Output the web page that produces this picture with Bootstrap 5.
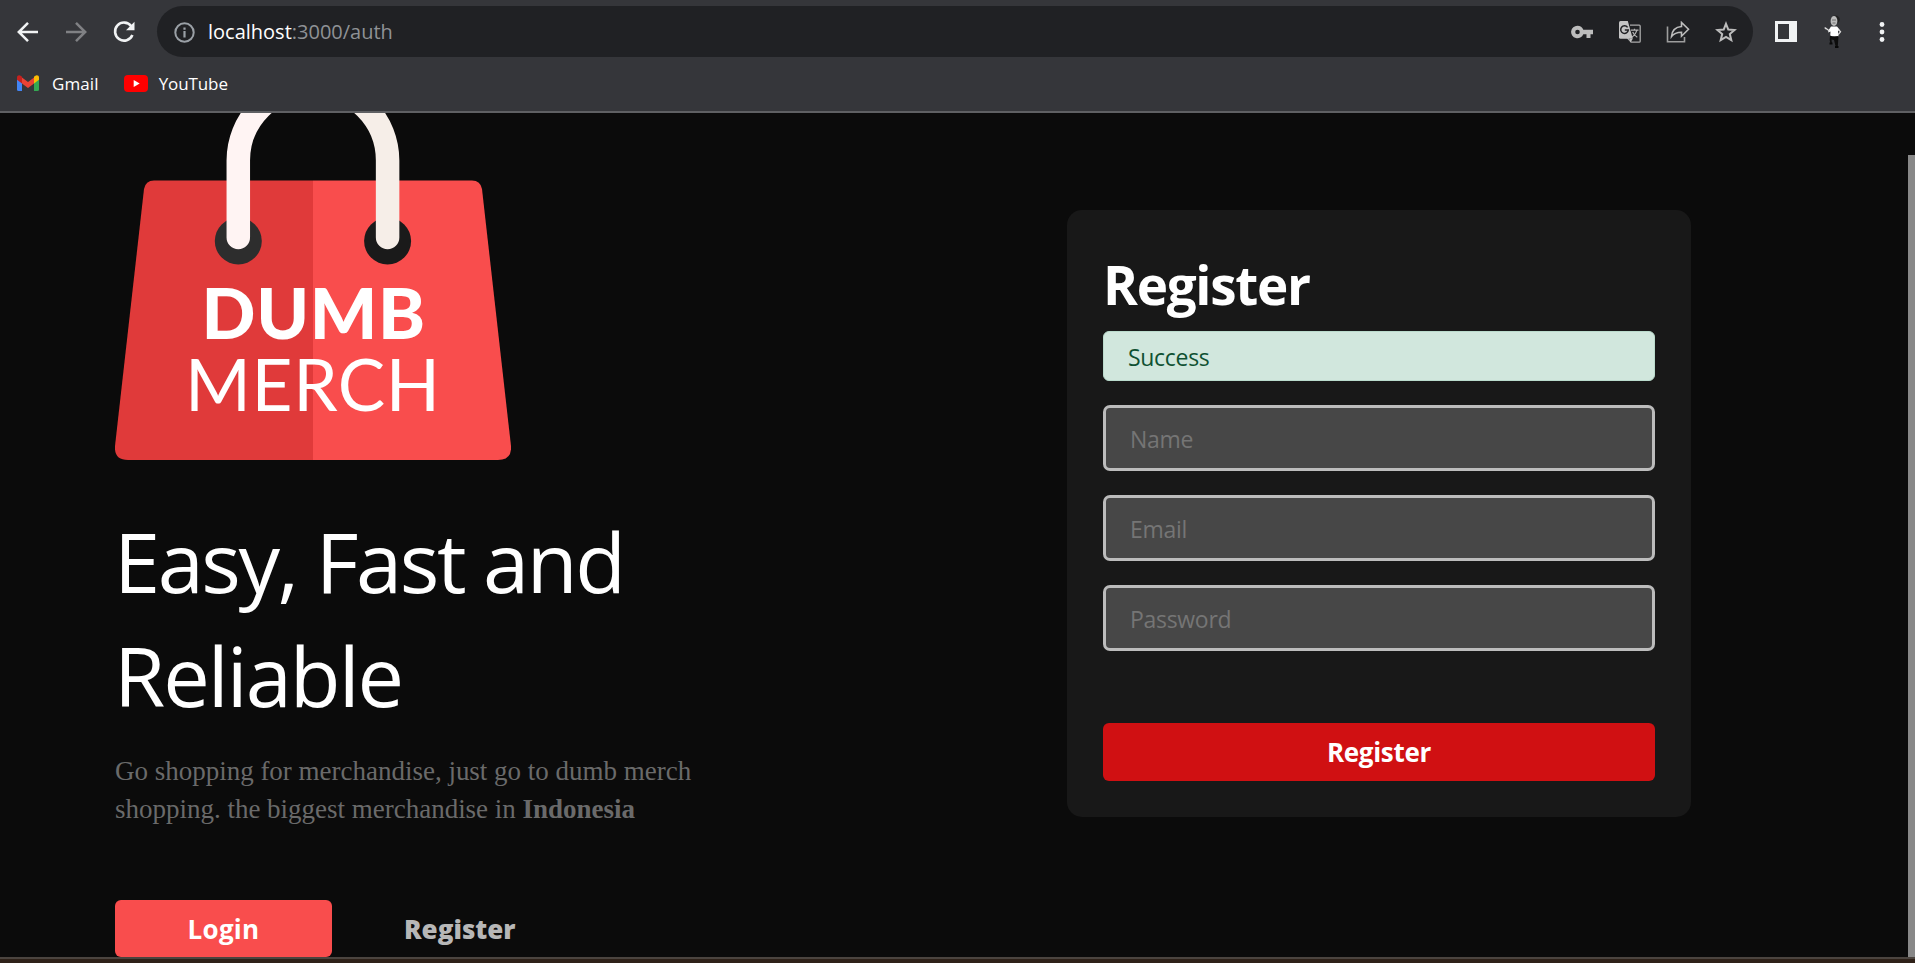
<!DOCTYPE html>
<html lang="en">
<head>
<meta charset="utf-8">
<meta name="viewport" content="width=device-width, initial-scale=1">
<title>DumbMerch</title>
<link href="https://cdn.jsdelivr.net/npm/bootstrap@5.3.0/dist/css/bootstrap.min.css" rel="stylesheet">
<style>
body{font-family:"Open Sans","Noto Sans",sans-serif;background:#2e2118;height:100vh}
svg{display:block}
.chrome-top{height:113px;background:#35363a;border-bottom:2px solid #5f6063;padding-top:6px}
.bar-row{height:51px;padding-left:4px}
.slot{width:48px;height:51px;flex:none;display:flex;align-items:center;justify-content:center}
.address{width:1596px;height:51px;border-radius:26px;background:#202124;margin-left:9px;margin-right:9px;padding-right:3px;font-size:20px;color:#fff}
.address .slot:first-child{width:51px;padding-left:4px}
.address .path{color:#8f9296}
.bookmarks{height:52px;font-size:17px;color:#fff;padding-left:17px}
.bookmarks span{padding-top:1px}
.mail-label{margin:0 25px 0 13px;letter-spacing:.1px}
.tube-label{margin-left:11px;letter-spacing:-.1px}
.viewport{height:844px;background:#0b0b0b}
.thumb{width:7px;margin-top:42px;background:#888}
.intro{width:620px;margin-left:115px}
.headline{font-size:83px;line-height:114px;color:#fff;margin:43px 0 20px -1px;font-weight:400}
.headline .l1{letter-spacing:-2.45px}
.headline .l2{letter-spacing:-2px}
.blurb{font-family:"Liberation Serif",serif;font-size:27px;line-height:38px;color:#6a6a6a;margin-bottom:72px;letter-spacing:-.01px}
.btn-brand{height:57px;width:217px;padding:2px 0 0;border:0;border-radius:6px;background:#f94d4d;color:#fff;font-size:26px;font-weight:700;letter-spacing:.3px}
.btn-plain{height:57px;padding:2px 0 0;border:0;margin-left:72px;color:#b7b7b7;font-size:26px;font-weight:800}
.panel{width:624px;height:607px;margin:97px 0 0 332px;padding:36px;border-radius:15px;background:#181818}
.panel h1{font-size:53px;line-height:77px;font-weight:700;letter-spacing:-1.3px;color:#fff;margin:0 0 8px 0}
.panel .alert{height:50px;padding:0 24px;margin-bottom:24px;border-radius:6px;font-size:23px;line-height:51px;letter-spacing:-.3px;background:#d1e7dd;border-color:#badbcc;color:#0f5132}
.panel .form-control{height:66px;margin-bottom:24px;border:3px solid #bcbcbc;border-radius:7px;background:#474747;color:#fff;font-size:23px;padding:2px 24px 0;letter-spacing:-.3px}
.panel .form-control::placeholder{color:#757575;opacity:1}
.panel .btn{height:58px;margin-top:48px;padding:1px 0 0;border:0;border-radius:6px;background:#d01012;color:#fff;font-size:26px;font-weight:700;letter-spacing:-.3px}
.bottom-edge{height:6px;border-top:2px solid #4b443f}
</style>
</head>
<body class="overflow-hidden">
<header class="chrome-top">
  <div class="bar-row d-flex">
    <div class="slot"><svg width="22" height="22" viewBox="0 0 22 22" fill="none" stroke="#f1f3f4" stroke-width="2.500"><path d="M21 11H2.500M11 1.800 1.800 11l9.200 9.200"/></svg></div>
    <div class="slot"><svg width="22" height="22" viewBox="0 0 22 22" fill="none" stroke="#808184" stroke-width="2.500"><path d="M1 11h18.500M11 1.800l9.200 9.200-9.200 9.200"/></svg></div>
    <div class="slot"><svg width="22" height="22" viewBox="0 0 22 22"><path d="M18.300 5.200A9 9 0 1 0 19.400 14" fill="none" stroke="#f1f3f4" stroke-width="2.600"/><path d="M21.500.8V9.300h-8.500z" fill="#f1f3f4"/></svg></div>
    <div class="address d-flex align-items-center">
      <div class="slot"><svg width="22" height="22" viewBox="0 0 22 22"><circle cx="10.500" cy="11.500" r="9.200" fill="none" stroke="#9aa0a6" stroke-width="2"/><path d="M9.400 10h2.200v6.500H9.400zM9.400 6.500h2.200v2.200H9.400z" fill="#9aa0a6"/></svg></div>
      <div class="flex-grow-1">localhost<span class="path">:3000/auth</span></div>
      <div class="slot"><svg width="22" height="14" viewBox="0 0 22 14" fill="#bdbdbd"><path fill-rule="evenodd" d="M6.500.7a6.300 6.300 0 1 0 5.800 8.500h3.200V13h4V9.200H22V4.700h-9.700A6.300 6.300 0 0 0 6.500.7zm0 4a2.300 2.300 0 1 1 0 4.600 2.300 2.300 0 0 1 0-4.600z"/></svg></div>
      <div class="slot"><svg width="22" height="22" viewBox="0 0 22 22"><path d="M11 4.200h9.200q1 0 1 1v15q0 1-1 1h-8L8.500 17" fill="none" stroke="#a9a9a9" stroke-width="1.300"/><path d="M1.500 0h7.300l5 17.800H1.500Q0 17.800 0 16.300V1.500Q0 0 1.500 0z" fill="#c4c4c4"/><path d="M10.500 17.800h3.300l-2.300 3.700z" fill="#c4c4c4"/><path d="M8.600 6.400A3.800 3.800 0 1 0 9.300 9H5.800" fill="none" stroke="#202124" stroke-width="1.500"/><path d="M12 9.200h7.500M15.500 7.700v1.500M18 9.200q-1 4-5 7M13.700 11q1.500 3.500 4.600 5.200" fill="none" stroke="#b5b5b5" stroke-width="1.200"/></svg></div>
      <div class="slot"><svg width="24" height="22" viewBox="0 0 24 22" fill="none" stroke="#bdbdbd" stroke-width="1.600"><path d="M1.500 5.500v15.300h17V16" stroke="#9d9d9d"/><path d="M15.500 1.500v4C9 6 6 9.500 5.500 15.500c2.500-3.300 5.500-4.300 10-4.300v4L22.500 8.300z"/></svg></div>
      <div class="slot"><svg width="22" height="22" viewBox="0 0 22 22" fill="none" stroke="#bdbdbd" stroke-width="2"><path d="m11 2.800 2.300 5.800 6.200.5-4.700 4 1.500 6.100L11 16l-5.300 3.200 1.500-6.100-4.700-4 6.200-.5z"/></svg></div>
    </div>
    <div class="slot"><svg width="22" height="21" viewBox="0 0 22 21"><path fill-rule="evenodd" d="M0 0h22v21H0zM3 3v15h11V3z" fill="#f1f3f4"/></svg></div>
    <div class="slot"><svg width="20" height="34" viewBox="0 0 20 34"><ellipse cx="11.500" cy="4.500" rx="4.300" ry="4" fill="#222"/><ellipse cx="10" cy="6" rx="3.400" ry="5" fill="#bcbcbc"/><path d="M8 5h4M8.500 8h3" stroke="#666" stroke-width=".9"/><path d="M7 11.500h6l2.500 3-1.500 1.700.5 5.300H6.200l.3-5L4 17.500l1-3z" fill="#fff"/><path d="m5.500 16-4-3M.7 12.500l1.600 1.600M14.500 14.500l2 2.300-2.300 2.800" stroke="#ddd" stroke-width="1.300" fill="none"/><path d="M6 20.500q3 1.500 8.500.5l-.7 10h-2.300l-1.500-6-2.500-.5L8 29H6.500l-.8-4z" fill="#0d0d0d"/><path d="M5.500 28.500h3M11 32h3.500" stroke="#080808" stroke-width="1.800"/></svg></div>
    <div class="slot"><svg width="6" height="22" viewBox="0 0 6 22" fill="#f1f3f4"><circle cx="3" cy="3.500" r="2.400"/><circle cx="3" cy="11" r="2.400"/><circle cx="3" cy="18.500" r="2.400"/></svg></div>
  </div>
  <nav class="bookmarks d-flex align-items-center">
    <svg width="22" height="16" viewBox="0 0 22 16"><path d="M0 4v10.500Q0 16 1.500 16H5V7z" fill="#4285f4"/><path d="M22 4v10.500Q22 16 20.500 16H17V7z" fill="#34a853"/><path d="M5 2.500 11 7l6-4.500v6L11 13 5 8.500z" fill="#ea4335"/><path d="M0 2.500C0 .3 2.200-.4 4 .9l1 .8v6.800L0 4.800z" fill="#c5221f"/><path d="M22 2.500C22 .3 19.800-.4 18 .9l-1 .8v6.800l5-3.700z" fill="#fbbc04"/></svg>
    <span class="mail-label">Gmail</span>
    <svg width="24" height="17" viewBox="0 0 24 17"><rect width="24" height="17" rx="4" fill="#f00"/><path d="m9.700 5 6 3.500-6 3.500z" fill="#fff"/></svg>
    <span class="tube-label">YouTube</span>
  </nav>
</header>
<main class="viewport d-flex overflow-hidden">
  <section class="intro flex-shrink-0">
    <svg width="396" height="348" viewBox="115 113 396 348">
      <path d="M154 180.500H313V460H128Q114 460 115 446L144 189Q145.500 180.500 154 180.500z" fill="#e03a3a"/>
      <path d="M313 180.500H472Q480.500 180.500 482 189L511 446Q512 460 498 460H313z" fill="#f94d4d"/>
      <circle cx="238.300" cy="241" r="23.500" fill="#2d2d2d"/><circle cx="387.600" cy="241" r="23.500" fill="#1a1a1a"/>
      <path d="M238.300 237.500V160.500A74.700 74.700 0 0 1 313 85.800" fill="none" stroke="#fff4f3" stroke-width="23.500" stroke-linecap="round"/>
      <path d="M387.600 237.500V160.500A74.700 74.700 0 0 0 313 85.800" fill="none" stroke="#f6eee8" stroke-width="23.500" stroke-linecap="round"/>
      <text x="201.500" y="339" font-family="Lato, sans-serif" font-weight="900" font-size="71" letter-spacing=".7" fill="#fff">DUMB</text>
      <text x="185" y="411" font-family="Lato, sans-serif" font-weight="400" font-size="71" letter-spacing=".6" fill="#fff">MERCH</text>
    </svg>
    <h2 class="headline"><span class="l1">Easy, Fast and</span><br><span class="l2">Reliable</span></h2>
    <p class="blurb">Go shopping for merchandise, just go to dumb merch<br>shopping. the biggest merchandise in <b>Indonesia</b></p>
    <div class="d-flex"><button class="btn btn-brand">Login</button><button class="btn btn-plain">Register</button></div>
  </section>
  <form class="panel flex-shrink-0">
    <h1>Register</h1>
    <div class="alert alert-success">Success</div>
    <input class="form-control" type="text" placeholder="Name">
    <input class="form-control" type="email" placeholder="Email">
    <input class="form-control" type="password" placeholder="Password">
    <button class="btn w-100" type="button">Register</button>
  </form>
  <div class="thumb ms-auto"></div>
</main>
<div class="bottom-edge"></div>
<script src="https://cdn.jsdelivr.net/npm/bootstrap@5.3.0/dist/js/bootstrap.bundle.min.js"></script>
</body>
</html>
